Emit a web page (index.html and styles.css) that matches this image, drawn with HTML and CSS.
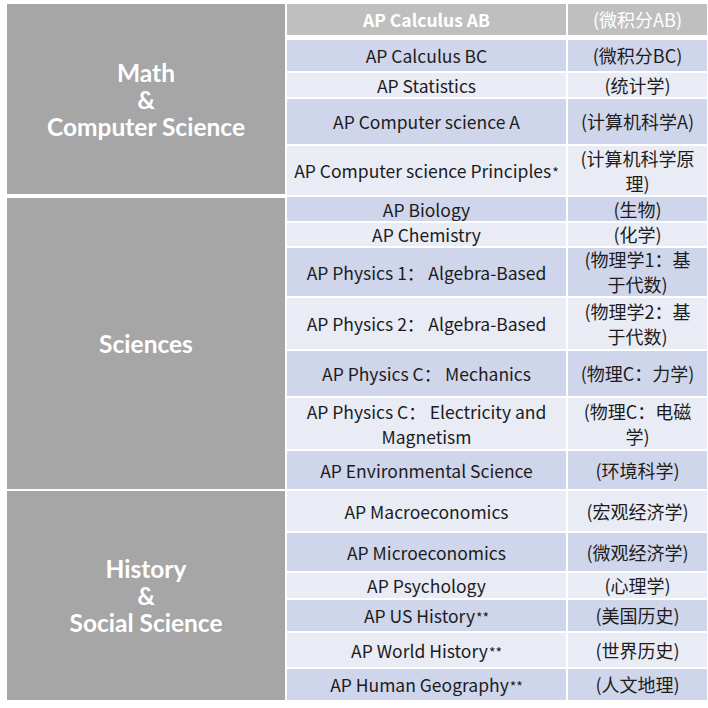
FILE: index.html
```html
<!DOCTYPE html>
<html lang="zh">
<head>
<meta charset="utf-8">
<link rel="stylesheet" href="styles.css">
</head>
<body>
<div class="table">
  <div class="cat cat-math">
    <span class="cat-line">Math</span>
    <span class="cat-line">&amp;</span>
    <span class="cat-line">Computer Science</span>
  </div>
  <div class="cat cat-sci">
    <span class="cat-line">Sciences</span>
  </div>
  <div class="cat cat-hist">
    <span class="cat-line">History</span>
    <span class="cat-line">&amp;</span>
    <span class="cat-line">Social Science</span>
  </div>

  <div class="cell name head">AP Calculus AB</div>
  <div class="cell cn head head-cn">(微积分AB)</div>

  <div class="cell name dark">AP Calculus BC</div>
  <div class="cell cn dark">(微积分BC)</div>

  <div class="cell name light">AP Statistics</div>
  <div class="cell cn light">(统计学)</div>

  <div class="cell name dark">AP Computer science A</div>
  <div class="cell cn dark">(计算机科学A)</div>

  <div class="cell name light">AP Computer science Principles<span class="ast">*</span></div>
  <div class="cell cn light">(计算机科学原<br>理)</div>

  <div class="cell name dark">AP Biology</div>
  <div class="cell cn dark">(生物)</div>

  <div class="cell name light">AP Chemistry</div>
  <div class="cell cn light">(化学)</div>

  <div class="cell name dark">AP Physics 1：&nbsp;Algebra-Based</div>
  <div class="cell cn dark">(物理学1：基<br>于代数)</div>

  <div class="cell name light">AP Physics 2：&nbsp;Algebra-Based</div>
  <div class="cell cn light">(物理学2：基<br>于代数)</div>

  <div class="cell name dark">AP Physics C：&nbsp;Mechanics</div>
  <div class="cell cn dark">(物理C：力学)</div>

  <div class="cell name light">AP Physics C：&nbsp;Electricity and<br>Magnetism</div>
  <div class="cell cn light">(物理C：电磁<br>学)</div>

  <div class="cell name dark">AP Environmental Science</div>
  <div class="cell cn dark">(环境科学)</div>

  <div class="cell name light">AP Macroeconomics</div>
  <div class="cell cn light">(宏观经济学)</div>

  <div class="cell name dark">AP Microeconomics</div>
  <div class="cell cn dark">(微观经济学)</div>

  <div class="cell name light">AP Psychology</div>
  <div class="cell cn light">(心理学)</div>

  <div class="cell name dark">AP US History<span class="ast">**</span></div>
  <div class="cell cn dark">(美国历史)</div>

  <div class="cell name light">AP World History<span class="ast">**</span></div>
  <div class="cell cn light">(世界历史)</div>

  <div class="cell name dark">AP Human Geography<span class="ast">**</span></div>
  <div class="cell cn dark">(人文地理)</div>
</div>
</body>
</html>
```
FILE: styles.css
```css
html, body {
  margin: 0;
  padding: 0;
  background: #ffffff;
}

body {
  font-family: "Noto Sans CJK SC", "Noto Sans", sans-serif;
  color: #1c1c1c;
}

.table {
  display: grid;
  grid-template-columns: 278px 279px 139px;
  grid-template-rows: 34px 31px 24px 45px 49px 24px 23px 48px 51px 45px 51px 38px 40px 38px 25px 31px 34px 31px;
  column-gap: 2px;
  row-gap: 2px;
  padding: 4px 0 0 7px;
  width: 700px;
}

.cat {
  grid-column: 1;
  background: #a6a6a6;
  color: #ffffff;
  font-family: Lato, "Noto Sans", sans-serif;
  font-weight: 700;
  font-size: 24.5px;
  line-height: 27px;
  display: flex;
  flex-direction: column;
  align-items: center;
  justify-content: center;
  text-align: center;
}

.cat-line {
  display: block;
  height: 27px;
}

.cat-math { grid-row: 1 / 6; margin-bottom: 1px; }
.cat-sci { grid-row: 6 / 13; margin-top: 1px; }
.cat-hist { grid-row: 13 / 19; }

.cell {
  display: flex;
  align-items: center;
  justify-content: center;
  text-align: center;
  font-size: 17.5px;
  line-height: 25px;
  white-space: nowrap;
}

.name { grid-column: 2; }
.cn { grid-column: 3; font-size: 18px; }

.dark { background: #cfd5ea; }
.light { background: #e9ebf5; }

.head {
  background: #bfbfbf;
  color: #ffffff;
  font-weight: 700;
  height: 31px;
  align-self: start;
}

.head-cn {
  font-weight: 400;
}

.ast {
  font-size: 14px;
  position: relative;
  top: 2px;
  margin-left: 1px;
}
```
